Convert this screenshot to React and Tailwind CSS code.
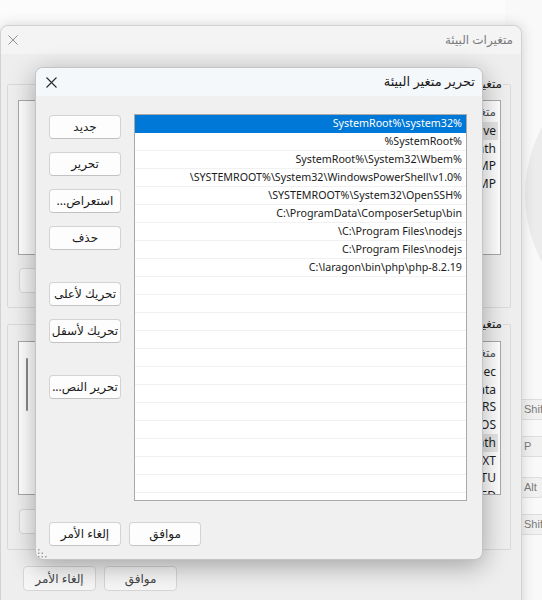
import React from "react";

const paths = [
  "%SystemRoot%\\system32",
  "%SystemRoot%",
  "%SystemRoot%\\System32\\Wbem",
  "%SYSTEMROOT%\\System32\\WindowsPowerShell\\v1.0\\",
  "%SYSTEMROOT%\\System32\\OpenSSH\\",
  "C:\\ProgramData\\ComposerSetup\\bin",
  "C:\\Program Files\\nodejs\\",
  "C:\\Program Files\\nodejs",
  "C:\\laragon\\bin\\php\\php-8.2.19",
];

const userVars = ["OneDrive", "Path", "TEMP", "TMP"];
const systemVars = ["ComSpec", "DriverData", "NUMBER_OF_PROCESSORS", "OS", "Path", "PATHEXT", "PROCESSOR_ARCHITECTU", "PHP_INI_SCANNED"];

const XIcon = ({ className }) => (
  <svg viewBox="0 0 11 11" className={className} fill="none" stroke="currentColor" strokeWidth="1.1">
    <path d="M0.5 0.5 L10.5 10.5 M10.5 0.5 L0.5 10.5" />
  </svg>
);

const Btn = ({ children, className = "" }) => (
  <button className={`h-[24px] rounded-[4px] border border-[#d3d3d3] border-b-[#c2c2c2] bg-[#fdfdfd] text-[12px] text-[#1b1b1b] flex items-center justify-center ${className}`}>
    {children}
  </button>
);

const BgBtn = ({ children, className = "" }) => (
  <div className={`h-[25px] w-[73px] rounded-[4px] border border-[#d6d6d6] bg-[#f6f6f6] text-[12px] text-[#444] flex items-center justify-center ${className}`}>
    {children}
  </div>
);

// list of variables in the back window, only the name column shows
const VarList = ({ items, highlight, heightClass, scroll }) => (
  <div className={`relative bg-white border border-[#a9a9a9] overflow-hidden ${heightClass}`}>
    <div className="h-[21px] flex items-center pr-[4px] text-[#555]">متغير</div>
    {items.map((name, i) => (
      <div key={i} className="h-[17.75px] flex">
        <div
          className={`w-[110px] mr-[2px] flex items-center pr-[2px] text-[12px] text-[#1f1f1f] whitespace-nowrap ${
            i === highlight ? "bg-[#e6e6e6]" : ""
          }`}
        >
          {name}
        </div>
      </div>
    ))}
    {scroll && <div className="absolute left-[7px] top-[16px] w-[2px] h-[53px] rounded-full bg-[#8a8a8a]" />}
  </div>
);

const Group = ({ label, children, className = "" }) => (
  <div className={`relative border border-[#d9d9d9] rounded-[2px] pl-[10px] pr-[9px] ${className}`}>
    <span className="absolute -top-[10px] right-[7px] px-[1px] leading-[17px] bg-[#eeeeee] text-[#202020]">{label}</span>
    {children}
  </div>
);

const Key = ({ children, className = "" }) => (
  <div className={`h-[21px] flex items-center rounded-[3px] border border-[#dedede] bg-[#f1f1f1] ${className}`}>{children}</div>
);

export default function App() {
  const rows = Array.from({ length: 22 }).map((_, i) => paths[i] ?? "");

  return (
    <div className="relative w-[542px] h-[600px] overflow-hidden bg-[#fcfcfc] text-[12px] font-[family-name:'Noto_Sans','DejaVu_Sans',sans-serif]">
      {/* window further behind, on the right */}
      <div className="absolute left-[505px] top-0 w-[200px] h-[600px] bg-[#f9f9f9]">
        <div className="absolute left-[20px] top-[52px] w-[290px] h-[285px] rounded-full bg-[#ececec]" />
        <div className="flex flex-col items-start pl-[13px] pt-[399px] text-[11px] text-[#7a7a7a] font-[family-name:'Liberation_Sans',sans-serif]">
          <Key className="pl-[5px] pr-[8px]">Shift</Key>
          <Key className="mt-[16px] w-[33px] pl-[5px]">P</Key>
          <Key className="mt-[20px] px-[5px]">Alt</Key>
          <Key className="mt-[16px] pl-[5px] pr-[8px]">Shift</Key>
        </div>
      </div>

      {/* back window: environment variables */}
      <div dir="rtl" className="absolute left-0 top-[25px] w-[522px] h-[600px] rounded-t-[8px] border border-[#d2d2d2] bg-[#eeeeee] shadow-[0_0_14px_rgba(0,0,0,0.16)]">
        <div className="h-[28px] bg-[#f4f4f4] rounded-t-[8px] flex items-center justify-between pr-[8px] pl-[7px] text-[#7c7c7c]">
          <span>متغيرات البيئة</span>
          <XIcon className="w-[10px] h-[10px] text-[#8e8e8e]" />
        </div>
        <div className="pl-[6px] pr-[10px]">
          <Group label="متغيرات المستخدم لـ user" className="mt-[30px] pt-[15px] pb-[14px]">
            <VarList items={userVars} highlight={0} heightClass="h-[155px]" />
            <div className="mt-[13px] flex justify-end gap-[8px] pl-[1px]">
              <BgBtn className="h-[24px]">جديد...</BgBtn>
              <BgBtn className="h-[24px]">تحرير...</BgBtn>
              <BgBtn className="h-[24px]">حذف</BgBtn>
            </div>
          </Group>
          <Group label="متغيرات النظام" className="mt-[16px] pt-[16px] pb-[15px]">
            <VarList items={systemVars} highlight={4} heightClass="h-[154px]" scroll />
            <div className="mt-[14px] flex justify-end gap-[8px] pl-[1px]">
              <BgBtn className="h-[24px]">جديد...</BgBtn>
              <BgBtn className="h-[24px]">تحرير...</BgBtn>
              <BgBtn className="h-[24px]">حذف</BgBtn>
            </div>
          </Group>
          <div className="mt-[16px] flex justify-end gap-[8px] pl-[16px]">
            <BgBtn>موافق</BgBtn>
            <BgBtn>إلغاء الأمر</BgBtn>
          </div>
        </div>
      </div>

      {/* front dialog: edit environment variable */}
      <div dir="rtl" className="absolute left-[35px] top-[67px] w-[448px] h-[493px] rounded-[8px] border border-[#c4c4c4] bg-[#f0f0f0] shadow-[0_6px_26px_rgba(0,0,0,0.32)] overflow-hidden flex flex-col">
        <div className="h-[28px] shrink-0 bg-[#f5f8fb] flex items-center justify-between pr-[7px] pl-[10px] text-[#1a1a1a]">
          <span className="text-[13px]">تحرير متغير البيئة</span>
          <XIcon className="w-[11px] h-[11px] text-[#2a2a2a]" />
        </div>
        <div className="flex-1 flex flex-col pt-[18px] pr-[15px] pl-[13px] pb-[13px]">
          <div className="flex gap-[13px]">
            <div className="w-[333px] h-[387px] bg-white border border-[#a9a9a9] overflow-hidden text-[10.7px]">
              {rows.map((p, i) => (
                <div
                  key={i}
                  className={`h-[18px] leading-[17px] pr-[4px] whitespace-nowrap border-b ${
                    i === 0 ? "bg-[#0078d7] text-white border-[#0078d7]" : "text-[#1a1a1a] border-[#f1f1f1]"
                  }`}
                >
                  {p}
                </div>
              ))}
            </div>
            <div className="w-[72px] flex flex-col">
              <Btn className="mt-[1px]">جديد</Btn>
              <Btn className="mt-[13px]">تحرير</Btn>
              <Btn className="mt-[13px]">استعراض...</Btn>
              <Btn className="mt-[13px]">حذف</Btn>
              <Btn className="mt-[32px] text-[11.5px]">تحريك لأعلى</Btn>
              <Btn className="mt-[13px] text-[11.5px]">تحريك لأسفل</Btn>
              <Btn className="mt-[32px] text-[11.5px]">تحرير النص...</Btn>
            </div>
          </div>
          <div className="mt-[21px] flex justify-end gap-[8px]">
            <Btn className="w-[72px] border-[#3a86d4] border-b-[#3a86d4]">موافق</Btn>
            <Btn className="w-[72px]">إلغاء الأمر</Btn>
          </div>
        </div>
        <svg className="absolute left-[2px] bottom-[1px] w-[9px] h-[9px]" viewBox="0 0 9 9" fill="#a0a0a0">
          <rect x="0" y="0" width="1.5" height="1.5" />
          <rect x="0" y="3.5" width="1.5" height="1.5" />
          <rect x="3.5" y="3.5" width="1.5" height="1.5" />
          <rect x="0" y="7" width="1.5" height="1.5" />
          <rect x="3.5" y="7" width="1.5" height="1.5" />
          <rect x="7" y="7" width="1.5" height="1.5" />
        </svg>
      </div>
    </div>
  );
}
